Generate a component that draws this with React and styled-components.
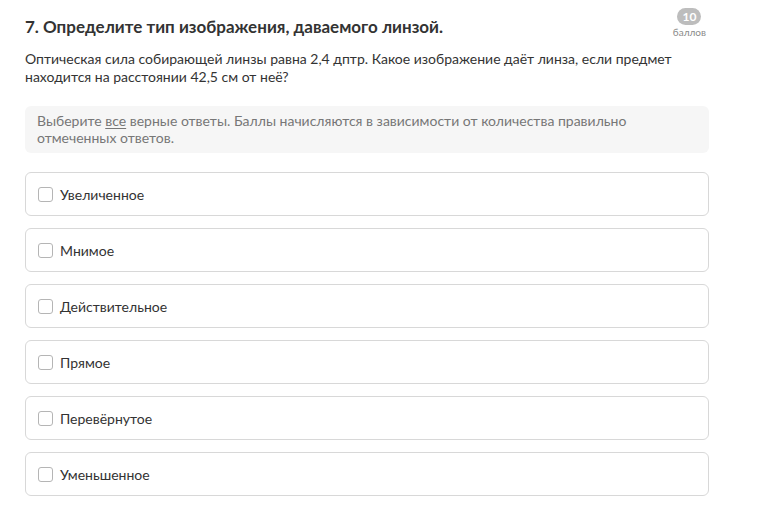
import React from "react";
import styled, { createGlobalStyle } from "styled-components";

const GlobalStyle = createGlobalStyle`
    body {
        margin: 0;
        background: #fff;
        font-family: Lato, "Open Sans", sans-serif;
        color: #333;
    }
`

const Page = styled.div`
    width: 684px;
    padding: 8px 0 0 25px;
`

const Header = styled.div`
    display: flex;
    justify-content: space-between;
    align-items: flex-start;
`

const Title = styled.h1`
    margin: 8px 0 0;
    font-size: 17px;
    font-weight: 700;
    color: #333;
    line-height: 22px;
`

const Score = styled.div`
    display: flex;
    flex-direction: column;
    align-items: center;
    margin-right: 3px;
`

const Badge = styled.div`
    background: #bdbdbd;
    color: #fff;
    font-size: 12px;
    font-weight: 700;
    border-radius: 9px;
    padding: 0 5px;
    height: 17px;
    line-height: 17px;
`

const BadgeLabel = styled.div`
    font-size: 10px;
    color: #8a8a8a;
    margin-top: 1px;
`

const Question = styled.p`
    margin: 12px 0 0;
    font-size: 14px;
    line-height: 18px;
    color: #333;
    width: 660px;
`

const Hint = styled.div`
    margin-top: 20px;
    background: #f6f6f6;
    border-radius: 6px;
    padding: 6px 12px 7px;
    font-size: 14px;
    line-height: 17px;
    color: #777;

    u {
        text-underline-offset: 2px;
    }
`

const Options = styled.div`
    margin-top: 19px;
    display: flex;
    flex-direction: column;
    gap: 12px;
`

const Option = styled.label`
    display: flex;
    align-items: center;
    gap: 7px;
    height: 42px;
    padding: 0 12px;
    border: 1px solid #d8d8d8;
    border-radius: 6px;
    font-size: 14px;
    color: #333;
    cursor: pointer;
`

const Box = styled.span`
    width: 13px;
    height: 13px;
    border: 1px solid #b5b5b5;
    border-radius: 3px;
    background: #fff;
`

const answers = [
    "Увеличенное",
    "Мнимое",
    "Действительное",
    "Прямое",
    "Перевёрнутое",
    "Уменьшенное",
]

const App = () => {
    return (
        <>
            <GlobalStyle />
            <Page>
                <Header>
                    <Title>7. Определите тип изображения, даваемого линзой.</Title>
                    <Score>
                        <Badge>10</Badge>
                        <BadgeLabel>баллов</BadgeLabel>
                    </Score>
                </Header>
                <Question>
                    Оптическая сила собирающей линзы равна 2,4 дптр. Какое изображение даёт линза, если предмет находится на расстоянии 42,5 см от неё?
                </Question>
                <Hint>
                    Выберите <u>все</u> верные ответы. Баллы начисляются в зависимости от количества правильно отмеченных ответов.
                </Hint>
                <Options>
                    {answers.map((a) => (
                        <Option key={a}>
                            <Box />
                            {a}
                        </Option>
                    ))}
                </Options>
            </Page>
        </>
    )
}

export default App;
